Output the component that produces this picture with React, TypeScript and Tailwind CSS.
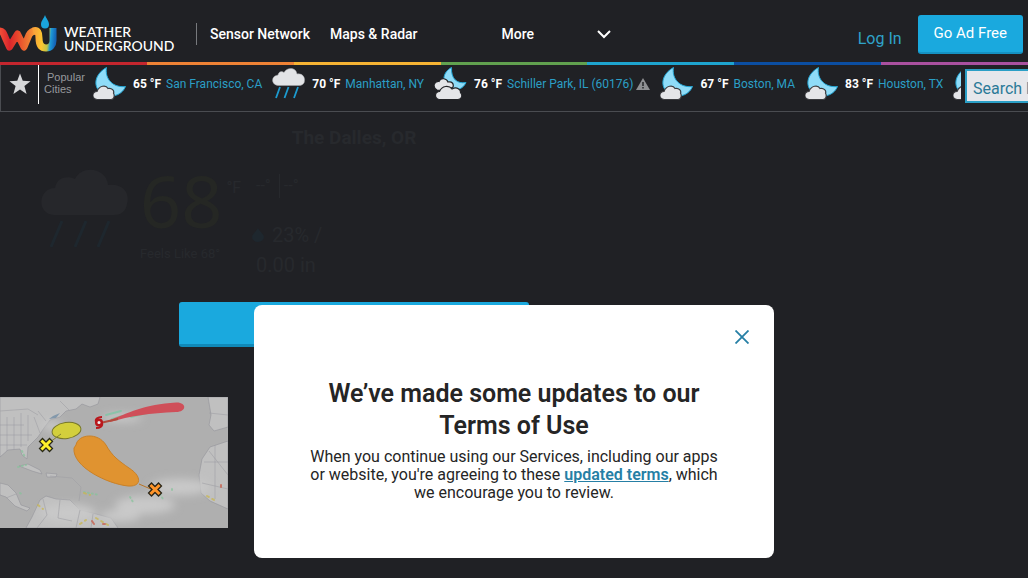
import { useState } from 'react';

type IconName = 'night' | 'rain' | 'cloudyNight';

const cities: { temp: number; name: string; icon: IconName; alert?: boolean }[] = [
  { temp: 65, name: 'San Francisco, CA', icon: 'night' },
  { temp: 70, name: 'Manhattan, NY', icon: 'rain' },
  { temp: 76, name: 'Schiller Park, IL (60176)', icon: 'cloudyNight', alert: true },
  { temp: 67, name: 'Boston, MA', icon: 'night' },
  { temp: 83, name: 'Houston, TX', icon: 'night' },
];

const stripes = ['bg-[#c4262e]', 'bg-[#ef8235]', 'bg-[#f6b333]', 'bg-[#61a14f]', 'bg-[#1ea4cf]', 'bg-[#0b4ea2]', 'bg-[#a9509f]'];

function Logo() {
  return (
    <svg viewBox="0 0 58 40" className="h-10 w-[58px] shrink-0" fill="none" strokeLinejoin="round" aria-hidden="true">
      <defs>
        <linearGradient id="wu-w" x1="0" y1="0" x2="38" y2="0" gradientUnits="userSpaceOnUse">
          <stop offset="0" stopColor="#f04e37" />
          <stop offset="0.25" stopColor="#d9252c" />
          <stop offset="0.5" stopColor="#ea4c2c" />
          <stop offset="0.75" stopColor="#f07a33" />
          <stop offset="1" stopColor="#fbb03b" />
        </linearGradient>
        <linearGradient id="wu-u" x1="34" y1="16" x2="56" y2="18" gradientUnits="userSpaceOnUse">
          <stop offset="0" stopColor="#f9a23a" />
          <stop offset="0.4" stopColor="#fbc62f" />
          <stop offset="0.65" stopColor="#c3c445" />
          <stop offset="0.78" stopColor="#1e9ad6" />
          <stop offset="1" stopColor="#1463b6" />
        </linearGradient>
      </defs>
      <path d="M-1 16 C3 16 3.500 18 5 22 L9.500 32 L17.500 19 L24 32 L29 20 C30.500 17 33 15.500 37 16.500" stroke="url(#wu-w)" strokeWidth="7" />
      <path d="M33 16 C38 14.500 39 18 39 23 C39 30 41.500 33 46 33 C50.500 33 53 30 53 25.500 L53 13" stroke="url(#wu-u)" strokeWidth="7" />
      <path d="M45 0 C46.500 4 49 6 49 9.500 A4 4 0 0 1 41 9.500 C41 6 43.500 4 45 0Z" fill="#1aa5dc" />
    </svg>
  );
}

function WeatherIcon({ name }: { name: IconName }) {
  if (name === 'rain') {
    return (
      <svg viewBox="0 0 34 34" className="size-[34px] shrink-0" aria-hidden="true">
        <path d="M8 18.500 C-1 19 -2 9 6 8 C7 4 10 4 12 5.500 C15 0 24 0 25 7 C31 6 33 11 32.500 13.500 C32.500 17 30 18.500 27 18.500Z" fill="#e2e3e6" stroke="#a7a9ad" strokeWidth="0.500" />
        <path d="M8 20 L4 31 M16.500 20 L12.500 31 M26 20 L22 31" stroke="#1c9bd0" strokeWidth="1.800" />
      </svg>
    );
  }
  if (name === 'cloudyNight') {
    return (
      <svg viewBox="0 0 34 34" className="size-[34px] shrink-0" aria-hidden="true">
        <path d="M17.500 0.500 C9 5 7 15 15 20.500 C22 25 29 22 32 15.500 C23 17 17 12 17.500 0.500Z" fill="#8fdcf8" stroke="#23a6d5" />
        <path d="M3 23 C-2 20 0 14 5 14.500 C7 10 13 11.500 14 15 C18 14 20 17 19 20 L12 24Z" fill="#e4e5e8" stroke="#232428" strokeWidth="1.200" />
        <path d="M5 32.500 C0 31 0.500 25 5.500 24.500 C8 18.500 15 18 18 22 C23 19 27 23 26.500 25.500 C29 28 28 32.500 24 32.500Z" fill="#e4e5e8" stroke="#232428" strokeWidth="1.200" />
      </svg>
    );
  }
  return (
    <svg viewBox="0 0 34 34" className="size-[34px] shrink-0" aria-hidden="true">
      <path d="M13.500 0.500 C0 8 -1 23 12.500 28 C21 31 29.500 27 32.500 19.500 C20 21 11.500 12 13.500 0.500Z" fill="#8fdcf8" stroke="#23a6d5" />
      <path d="M4 32.500 C-2 31 -1 25 4 24.500 C6 18.500 13 17.500 15 21.500 C19 20.500 21.500 24 20.500 26 C22 29 21 32.500 18 32.500Z" fill="#e4e5e8" stroke="#3a3b3f" strokeWidth="1.200" />
    </svg>
  );
}

function OutlookMap() {
  return (
    <svg viewBox="0 0 228 131" className="block h-[131px] w-[228px]" role="img" aria-label="Atlantic tropical outlook">
      <defs>
        <filter id="haze" x="-20%" y="-40%" width="140%" height="180%">
          <feGaussianBlur stdDeviation="4" />
        </filter>
      </defs>
      <rect width="228" height="131" fill="#afafaf" />
      {/* land masses */}
      <g fill="#c0c0c0" stroke="#94949a" strokeWidth="0.600">
        <path d="M0 0 H100 L98 7 L90 10 L82 7 L76 12 L66 14 L60 20 L50 23 L44 31 L38 40 L28 50 L27 62 L22 58 L20 52 L8 53 L0 60Z" />
        <path d="M0 86 L8 88 L16 96 L21 108 L30 111 L27 114 L15 109 L6 100 L0 98Z" />
        <path d="M40 103 L46 99 L56 102 L70 103 L80 113 L100 118 L111 121 L118 131 H26 L32 120Z" />
        <path d="M228 44 L210 50 L202 62 L199 78 L201 96 L210 104 L228 112Z" />
        <path d="M208 0 H228 V30 L214 34 L209 28 L211 18Z" />
        <path d="M19 69 L28 67 L40 73 L42 77 L32 74Z M46 76 L57 77 L56 80 L47 80Z" />
      </g>
      <g fill="#c9c9c9" filter="url(#haze)">
        <ellipse cx="180" cy="90" rx="30" ry="8" />
        <ellipse cx="145" cy="108" rx="30" ry="9" />
        <ellipse cx="120" cy="119" rx="20" ry="6" />
        <ellipse cx="68" cy="116" rx="28" ry="9" />
        <ellipse cx="52" cy="29" rx="10" ry="5" />
        <ellipse cx="122" cy="21" rx="20" ry="4" />
      </g>
      <g fill="none" stroke="#a0a0a5" strokeWidth="0.600">
        <path d="M0 14 L28 12 L38 18 M0 28 H24 M0 38 H32 M0 48 H27 M7 20 V54 M14 20 V53 M21 16 V50 M28 18 V44 M34 20 L40 36 M38 14 L46 24 M60 4 L70 14" />
        <path d="M60 103 L58 121 L72 124 M80 113 L76 131 M93 117 L91 131 M43 102 L47 118 L37 131 M204 65 H228 M209 54 L228 78 M202 86 L228 92 M215 48 V102 M209 16 L228 18" />
        <path d="M6 101 L16 97 M50 79 L72 81 L81 90 L79 104" />
      </g>
      <path d="M49 22 L53 19 L60 16 L56 21Z" fill="#8398ab" />
      {/* radar echoes */}
      <g fill="none" strokeLinecap="round" strokeWidth="2" opacity="0.700">
        <path d="M106 18 L121 14 M131 20 L147 16 M112 22 L122 19" stroke="#78c8a4" />
        <path d="M22 54 L25 60 M18 70 L26 68 M20 96 L23 98 M84 95 L99 98 M130 100 L133 105 M160 97 L163 102 M172 92 V96" stroke="#86c39b" strokeDasharray="1 3" />
        <path d="M38 108 L43 112 M80 127 L86 123 M96 121 L108 128 M207 99 L214 103 M84 96 L90 98" stroke="#c9b64c" strokeDasharray="2 4" />
        <path d="M92 124 L94 127 M103 127 H105 M221 88 V90" stroke="#c95844" />
      </g>
      <path d="M110 23 C126 17 145 7 176 5.500 C187 5 187 15 176 15 C150 16 130 19 110 25Z" fill="#cf4f59" />
      <path d="M100 26 L118 22" stroke="#b04b3d" strokeWidth="2" />
      <ellipse cx="66.500" cy="33.500" rx="14.500" ry="8" transform="rotate(-8 66.500 33.500)" fill="#d3cf3c" stroke="#777729" />
      <path d="M46 48 L61 37" stroke="#84832f" />
      <path d="M76 48 C78 37 98 35 106 48 C112 59 119 64 129 71 C142 79 142 90 128 89 C108 87 72 70 74 51Z" fill="#e09330" stroke="#c98128" />
      <path d="M139 87 L153 93" stroke="#b87527" />
      <g strokeLinecap="square">
        <path d="M42.500 44.500 L49.500 51.500 M49.500 44.500 L42.500 51.500" stroke="#282817" strokeWidth="5.500" />
        <path d="M42.500 44.500 L49.500 51.500 M49.500 44.500 L42.500 51.500" stroke="#fff02b" strokeWidth="3" />
        <path d="M151.500 89 L158.500 96 M158.500 89 L151.500 96" stroke="#282417" strokeWidth="5.500" />
        <path d="M151.500 89 L158.500 96 M158.500 89 L151.500 96" stroke="#ff9429" strokeWidth="3" />
      </g>
      <circle cx="99" cy="25.500" r="2.800" fill="#eee" stroke="#b9171c" strokeWidth="2.500" />
      <path d="M96 25 C95 22 98 20 102 20 M102 26 C103 29 100 31 96 31" fill="none" stroke="#b9171c" strokeWidth="2" />
    </svg>
  );
}

function Header() {
  return (
    <header>
      <div className="flex h-[62px] items-center overflow-hidden">
        <a href="#" className="flex w-[196px] items-center gap-1.5 pt-2 text-white" aria-label="Weather Underground home">
          <Logo />
          <span className="pt-2 font-['Lato',sans-serif] text-sm leading-[14px] font-medium">
            WEATHER
            <br />
            UNDERGROUND
          </span>
        </a>
        <nav className="flex flex-1 items-center pt-1.5 text-sm font-medium text-white">
          <span className="h-[22px] w-px bg-[#77797d]" />
          <a href="#" className="ml-[13px]">Sensor Network</a>
          <a href="#" className="ml-5">Maps &amp; Radar</a>
          <button type="button" className="ml-[84px] flex items-center gap-[63px]">
            More
            <svg viewBox="0 0 14 10" className="h-2.5 w-3.5" fill="none" stroke="white" strokeWidth="2" aria-hidden="true">
              <path d="M1 2 L7 8 L13 2" />
            </svg>
          </button>
        </nav>
        <a href="#" className="pt-4 text-base text-[#2fa3c9]">Log In</a>
        <button type="button" className="mt-1.5 mr-[5px] ml-4 h-[39px] rounded-[3px] border-b-2 border-[#1592c3] bg-[#1aa9de] px-4 text-[15px] text-white">
          Go Ad Free
        </button>
      </div>
      <div className="flex h-[3px]">
        {stripes.map((s) => (
          <span key={s} className={`flex-1 ${s}`} />
        ))}
      </div>
      <div className="flex h-[47px] border-b border-l border-[#4a4c51]">
        <button type="button" className="flex w-[37px] justify-center pt-2" aria-label="Favorites">
          <svg viewBox="0 0 24 24" className="size-[22px]" fill="#d7d8da" aria-hidden="true">
            <path d="M12 0.500 L15 8.500 L23.500 9 L16.800 14.200 L19.200 23 L12 18 L4.800 23 L7.200 14.200 L0.500 9 L9 8.500Z" />
          </svg>
        </button>
        <div className="h-[39px] w-px bg-white" />
        <div className="w-[54px] shrink-0 pt-1.5 pl-[5px] font-['Liberation_Sans',sans-serif] text-[11px] leading-3 text-[#97999d]">
          <span className="pl-[3px]">Popular</span>
          <br />
          Cities
        </div>
        <ul className="flex min-w-0 flex-1 gap-2.5 overflow-hidden pt-0.5 text-xs">
          {cities.map((c) => (
            <li key={c.name} className="flex shrink-0">
              <a href="#" className="flex h-[34px] items-center whitespace-nowrap">
                <WeatherIcon name={c.icon} />
                <b className="ml-1.5 font-bold text-white">{c.temp} °F</b>
                <span className="ml-[5px] text-[#2b9fc6]">{c.name}</span>
                {c.alert && (
                  <svg viewBox="0 0 14 12" className="ml-[3px] h-3 w-3.5" aria-hidden="true">
                    <path d="M7 0 L14 12 H0Z" fill="#8e9093" />
                    <path d="M7 4 V8 M7 9 V10.500" stroke="#25262a" strokeWidth="1.500" />
                  </svg>
                )}
              </a>
            </li>
          ))}
          {/* next city, mostly hidden behind the search box */}
          <li className="shrink-0">
            <WeatherIcon name="night" />
          </li>
        </ul>
        <div className="ml-1 w-[63px] shrink-0 overflow-hidden pt-1">
          <input
            type="search"
            aria-label="Search Locations"
            placeholder="Search Locations"
            className="h-[34px] w-60 border-2 border-[#2b9fc6] bg-[#e6e7eb] px-1.5 pt-1 text-base text-[#2b7a98] placeholder:text-[#2b7a98]"
          />
        </div>
      </div>
    </header>
  );
}

function CurrentConditions() {
  return (
    <section className="text-[#27292d]">
      <h1 className="pt-3.5 text-center text-[19px] leading-6 font-bold">The Dalles, OR</h1>
      <div className="flex h-[152px] pt-4 pl-10">
        <svg viewBox="0 0 88 84" className="mt-0.5 h-[84px] w-[88px]" aria-hidden="true">
          <path d="M14 47 C-4 46 -2 20 15 20 C17 8 29 8 35 11 C42 -4 67 0 68 17 C84 15 90 26 87 36 C86 44 80 47 74 47Z" fill="#26272b" />
          <path d="M22 53 L11 79 M46 53 L35 79 M69 53 L58 79" stroke="#1e272e" strokeWidth="3" />
        </svg>
        <div className="w-28 pl-3">
          <div className="flex">
            <span className="font-['Noto_Sans',sans-serif] text-[72px] leading-[68px] text-[#252724]">68</span>
            <span className="pt-2.5 pl-1 text-base">°F</span>
          </div>
          <p className="pt-2.5 text-[13px] whitespace-nowrap">Feels Like 68°</p>
        </div>
        <div className="w-28 pl-3 text-xl leading-[30px]">
          <p className="flex gap-2 pt-2 pl-1 text-base">
            <span>--°</span>
            <span className="border-l border-[#27292d] pl-1">--°</span>
          </p>
          <p className="flex items-center gap-2 pt-[22px]">
            <svg viewBox="0 0 12 14" className="h-3.5 w-3" fill="#1e272e" aria-hidden="true">
              <path d="M6 0 C8 4 12 6 12 9 A6 5 0 0 1 0 9 C0 6 4 4 6 0Z" />
            </svg>
            23% /
          </p>
          <p className="pl-1">0.00 in</p>
        </div>
      </div>
      <button type="button" className="mx-auto block h-[45px] w-[350px] rounded-[3px] border-b-[3px] border-[#1089b8] bg-[#1aa9de]" aria-label="View forecast" />
    </section>
  );
}

export default function App() {
  const [open, setOpen] = useState(true);

  return (
    <div className="min-h-screen overflow-hidden bg-[#202125] font-['Roboto',sans-serif]">
      <Header />
      <main className="flex">
        <div className="min-w-0 flex-1">
          <CurrentConditions />
          <div className="pt-[50px] pb-12">
            <OutlookMap />
          </div>
        </div>
        <aside className="w-80" />
      </main>

      {open && (
        <div
          role="dialog"
          aria-labelledby="terms-title"
          className="fixed inset-x-0 bottom-5 mx-auto max-w-[520px] rounded-lg bg-white px-12 pt-[73px] pb-14 text-center text-[#252525]"
        >
          <button type="button" onClick={() => setOpen(false)} className="absolute top-6 right-6 p-px" aria-label="Close">
            <svg viewBox="0 0 14 14" className="size-3.5" fill="none" stroke="#267fa5" strokeWidth="1.800" aria-hidden="true">
              <path d="M0.500 0.500 L13.500 13.500 M13.500 0.500 L0.500 13.500" />
            </svg>
          </button>
          <h2 id="terms-title" className="px-5 text-[25px] leading-8 font-semibold">
            We’ve made some updates to our Terms of Use
          </h2>
          <p className="pt-1.5 text-base leading-[18px]">
            When you continue using our Services, including our apps or website, you're agreeing to these{' '}
            <a href="#" className="font-semibold text-[#267fa5] underline">updated terms</a>, which we encourage you to review.
          </p>
        </div>
      )}
    </div>
  );
}
